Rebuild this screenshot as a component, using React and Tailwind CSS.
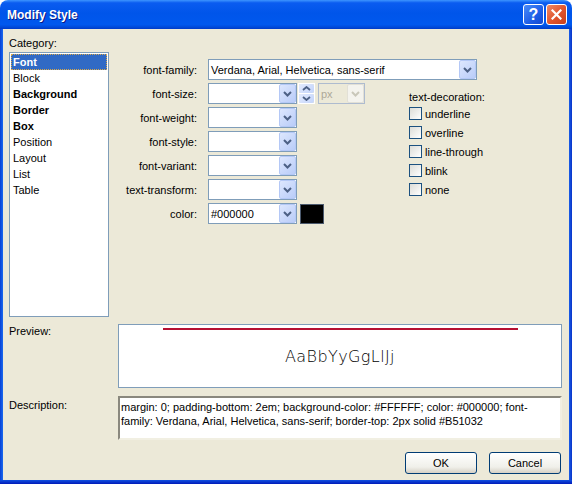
const Chevron = ({color = '#4d6185'}) => (
  <svg width="9" height="6" viewBox="0 0 9 6">
    <path d="M1 1 L4.5 4.5 L8 1" fill="none" stroke={color} strokeWidth="2" />
  </svg>
);

const ComboButton = ({disabled}) => (
  <div
    className={
      disabled
        ? 'flex h-[19px] w-[17px] items-center justify-center rounded-[2px] border border-[#e2e0d6] bg-[#f4f3ee]'
        : 'flex h-[19px] w-[17px] items-center justify-center rounded-[2px] border border-[#b4c8f6] bg-[linear-gradient(135deg,#dde7fe,#b9ccf8)]'
    }>
    <Chevron color={disabled ? '#c9c7ba' : '#4d6185'} />
  </div>
);

const Combo = ({className, value}) => (
  <div className={`flex h-[21px] items-center border border-[#7f9db9] bg-white ${className}`}>
    <span className="flex-1 truncate pl-[2px]">{value}</span>
    <ComboButton />
  </div>
);

const Row = ({label, children}) => (
  <div className="flex h-[21px] items-center">
    <div className="w-[88px] text-right">{label}</div>
    <div className="ml-[11px] flex items-center">{children}</div>
  </div>
);

const Checkbox = ({label}) => (
  <div className="flex h-[13px] items-center">
    <div className="h-[13px] w-[13px] border border-[#1c5180] bg-[linear-gradient(135deg,#dcdcd7,#ffffff)]" />
    <span className="ml-[3px] font-normal">{label}</span>
  </div>
);

const categories = [
  {name: 'Font', bold: true, selected: true},
  {name: 'Block'},
  {name: 'Background', bold: true},
  {name: 'Border', bold: true},
  {name: 'Box', bold: true},
  {name: 'Position'},
  {name: 'Layout'},
  {name: 'List'},
  {name: 'Table'},
];

const XpButton = ({children}) => (
  <button className="flex h-[22px] w-[72px] items-center justify-center rounded-[3px] border border-[#003c74] bg-[linear-gradient(180deg,#ffffff,#f0f0ea_70%,#d6d0c5)] text-[11px] text-black">
    {children}
  </button>
);

export default function App() {
  return (
    <div className="h-[484px] w-[572px] bg-white font-['Liberation_Sans',Arial,sans-serif] text-[11px] leading-[14px] text-black">
      <div className="flex h-full flex-col overflow-hidden rounded-t-[8px]">
        {/* title bar */}
        <div className="flex h-[29px] items-center bg-[linear-gradient(180deg,#3d95ff_0%,#0a5cf0_10%,#0055ea_45%,#0058ee_85%,#0049d8_94%,#003ac8_100%)] pl-[7px] pr-[5px]">
          <span className="flex-1 text-[12px] font-bold text-white [text-shadow:1px_1px_#0a1883]">
            Modify Style
          </span>
          <div className="flex gap-[2px]">
            <div className="flex h-[21px] w-[21px] items-center justify-center rounded-[3px] border border-white bg-[linear-gradient(135deg,#4b8cf8,#1d5de6_60%,#1448d0)] text-[16px] font-bold leading-none text-white">
              ?
            </div>
            <div className="flex h-[21px] w-[21px] items-center justify-center rounded-[3px] border border-white bg-[linear-gradient(135deg,#ee8a64,#e0532c_55%,#c8401c)]">
              <svg width="11" height="11" viewBox="0 0 11 11">
                <path d="M1.5 1.5 L9.5 9.5 M9.5 1.5 L1.5 9.5" stroke="white" strokeWidth="2.2" strokeLinecap="square" />
              </svg>
            </div>
          </div>
        </div>

        <div className="flex flex-1">
          <div className="w-[3px] bg-[linear-gradient(90deg,#0840d4,#1a6af0)]" />
          {/* client */}
          <div className="flex flex-1 flex-col bg-[#ece9d8] pl-[6px] pr-[4px] pt-[7px]">
            <div className="flex">
              <div className="flex w-[100px] flex-col">
                <div className="h-[14px]">Category:</div>
                <div className="mt-[2px] h-[265px] border border-[#7f9db9] bg-white p-[1px]">
                  {categories.map((c) => (
                    <div
                      key={c.name}
                      className={`h-[16px] pl-[2px] leading-[16px] ${c.bold ? 'font-bold' : ''} ${
                        c.selected ? 'bg-[#316ac5] text-white outline-1 outline-dotted outline-[#d8a84a] -outline-offset-1' : ''
                      }`}>
                      {c.name}
                    </div>
                  ))}
                </div>
              </div>

              <div className="mt-[23px] flex flex-1 flex-col gap-[3px]">
                <Row label="font-family:">
                  <Combo className="w-[269px]" value="Verdana, Arial, Helvetica, sans-serif" />
                </Row>
                <div className="flex">
                  <div className="flex w-[300px] flex-col gap-[3px]">
                    <Row label="font-size:">
                      <Combo className="w-[89px]" value="" />
                      <div className="ml-[1px] flex h-[21px] w-[17px] flex-col border border-white bg-[#ece9d8]">
                        <div className="flex flex-1 items-center justify-center rounded-[2px] bg-[linear-gradient(135deg,#e3ebfe,#c3d4fa)]">
                          <svg width="9" height="5" viewBox="0 0 9 5">
                            <path d="M1 4 L4.5 1 L8 4" fill="none" stroke="#4d6185" strokeWidth="1.8" />
                          </svg>
                        </div>
                        <div className="h-[1px] bg-white" />
                        <div className="flex flex-1 items-center justify-center rounded-[2px] bg-[linear-gradient(135deg,#e3ebfe,#c3d4fa)]">
                          <svg width="9" height="5" viewBox="0 0 9 5">
                            <path d="M1 1 L4.5 4 L8 1" fill="none" stroke="#4d6185" strokeWidth="1.8" />
                          </svg>
                        </div>
                      </div>
                      <div className="ml-[3px] flex h-[21px] w-[47px] items-center border border-[#aebbcf] bg-[#ece9d8] text-[#aca899]">
                        <span className="flex-1 pl-[2px]">px</span>
                        <ComboButton disabled />
                      </div>
                    </Row>
                    <Row label="font-weight:">
                      <Combo className="w-[89px]" value="" />
                    </Row>
                    <Row label="font-style:">
                      <Combo className="w-[89px]" value="" />
                    </Row>
                    <Row label="font-variant:">
                      <Combo className="w-[89px]" value="" />
                    </Row>
                    <Row label="text-transform:">
                      <Combo className="w-[89px]" value="" />
                    </Row>
                    <Row label="color:">
                      <Combo className="w-[89px]" value="#000000" />
                      <div className="ml-[3px] h-[20px] w-[24px] border border-[#4c5a6e] bg-black" />
                    </Row>
                  </div>
                  <div className="flex flex-col pt-[7px]">
                    <div className="h-[14px]">text-decoration:</div>
                    <div className="mt-[3px] flex flex-col gap-[6px]">
                      <Checkbox label="underline" />
                      <Checkbox label="overline" />
                      <Checkbox label="line-through" />
                      <Checkbox label="blink" />
                      <Checkbox label="none" />
                    </div>
                  </div>
                </div>
              </div>
            </div>

            {/* preview */}
            <div className="mt-[7px] flex pr-[3px]">
              <div className="w-[109px]">Preview:</div>
              <div className="h-[64px] flex-1 border border-[#7f9db9] bg-white">
                <div className="mx-auto mt-[3px] w-[355px] border-t-2 border-[#b51032] pt-[18px] text-center font-['DejaVu_Sans',Verdana,sans-serif] text-[16px] font-light leading-[17px] tracking-[0.4px]">
                  AaBbYyGgLlJj
                </div>
              </div>
            </div>

            {/* description */}
            <div className="mt-[8px] flex pr-[3px]">
              <div className="w-[109px] pt-[2px]">Description:</div>
              <div className="h-[44px] flex-1 border-2 border-b-[#f1efe2] border-l-[#8a887e] border-r-[#f1efe2] border-t-[#8a887e] bg-white pl-[1px] pt-[2px]">
                margin: 0; padding-bottom: 2em; background-color: #FFFFFF; color: #000000; font-
                <br />
                family: Verdana, Arial, Helvetica, sans-serif; border-top: 2px solid #B51032
              </div>
            </div>

            {/* buttons */}
            <div className="mt-[12px] flex justify-end gap-[12px] pr-[4px]">
              <XpButton>OK</XpButton>
              <XpButton>Cancel</XpButton>
            </div>
          </div>
          <div className="w-[3px] bg-[linear-gradient(90deg,#1a5fe8,#0832c8)]" />
        </div>
        <div className="h-[4px] bg-[linear-gradient(180deg,#1050e0,#0019b8)]" />
      </div>
    </div>
  );
}
